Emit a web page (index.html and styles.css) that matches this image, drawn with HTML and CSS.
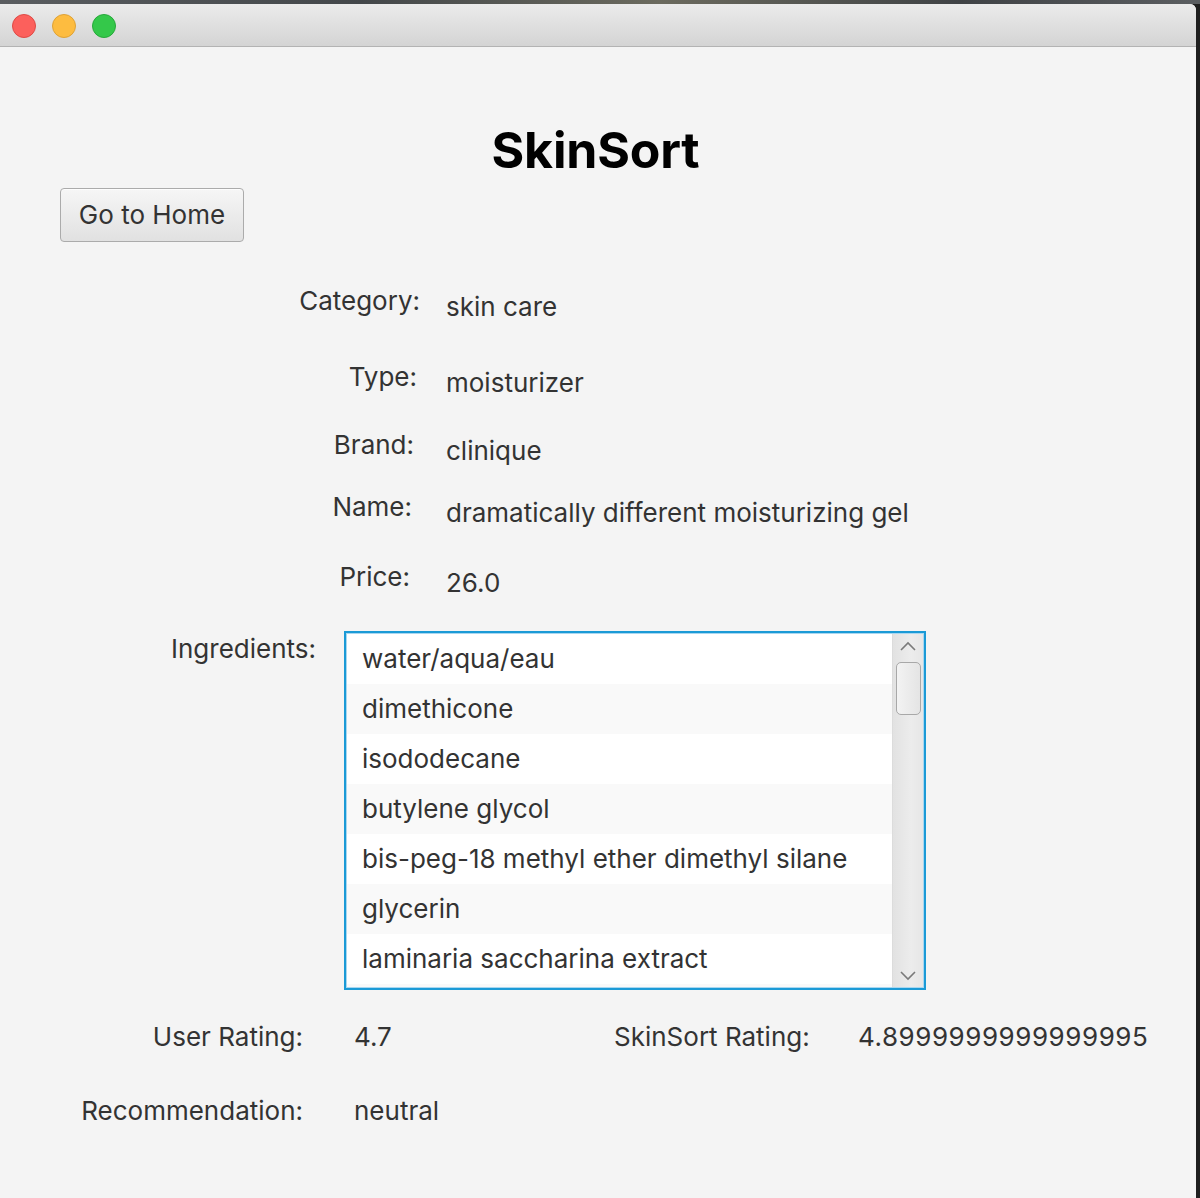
FILE: index.html
```html
<!DOCTYPE html>
<html lang="en">
<head>
<meta charset="utf-8">
<title>SkinSort</title>
<link rel="stylesheet" href="styles.css">
</head>
<body>
<div class="desktop-strip"></div>
<div class="window">
  <div class="titlebar">
    <span class="light light-close"></span>
    <span class="light light-min"></span>
    <span class="light light-max"></span>
  </div>
  <div class="content">
    <h1 class="app-title">SkinSort</h1>
    <button class="home-btn">Go to Home</button>

    <div class="field field-category">
      <div class="field-label">Category:</div>
      <div class="field-value">skin care</div>
    </div>
    <div class="field field-type">
      <div class="field-label">Type:</div>
      <div class="field-value">moisturizer</div>
    </div>
    <div class="field field-brand">
      <div class="field-label">Brand:</div>
      <div class="field-value">clinique</div>
    </div>
    <div class="field field-name">
      <div class="field-label">Name:</div>
      <div class="field-value">dramatically different moisturizing gel</div>
    </div>
    <div class="field field-price">
      <div class="field-label">Price:</div>
      <div class="field-value">26.0</div>
    </div>

    <div class="ingredients">
      <div class="ingredients-label">Ingredients:</div>
      <div class="listbox">
        <div class="list-items">
          <div class="list-row">water/aqua/eau</div>
          <div class="list-row">dimethicone</div>
          <div class="list-row">isododecane</div>
          <div class="list-row">butylene glycol</div>
          <div class="list-row">bis-peg-18 methyl ether dimethyl silane</div>
          <div class="list-row">glycerin</div>
          <div class="list-row">laminaria saccharina extract</div>
          <div class="list-row list-row-empty"></div>
        </div>
        <div class="scrollbar">
          <svg class="arrow arrow-up" width="20" height="12" viewBox="0 0 20 12"><path d="M3 10 L10 3 L17 10" fill="none" stroke="#7a7a7a" stroke-width="1.6"/></svg>
          <div class="thumb"></div>
          <div class="track-fill"></div>
          <svg class="arrow arrow-down" width="20" height="12" viewBox="0 0 20 12"><path d="M3 2 L10 9 L17 2" fill="none" stroke="#7a7a7a" stroke-width="1.6"/></svg>
        </div>
      </div>
    </div>

    <div class="rating-row">
      <div class="r-label">User Rating:</div>
      <div class="r-value r-value-user">4.7</div>
      <div class="r-label-2">SkinSort Rating:</div>
      <div class="r-value-2">4.8999999999999995</div>
    </div>
    <div class="rating-row rating-row-rec">
      <div class="r-label">Recommendation:</div>
      <div class="r-value">neutral</div>
    </div>
  </div>
</div>
</body>
</html>
```
FILE: styles.css
```css
* { box-sizing: border-box; }
html, body {
  margin: 0;
  padding: 0;
  width: 1200px;
  height: 1198px;
  overflow: hidden;
}
body {
  background: #1f1f1f;
  font-family: Inter, "Noto Sans", sans-serif;
  color: #333333;
}
.desktop-strip {
  height: 4px;
  background: linear-gradient(90deg, #5a5d60 0%, #43474a 30%, #6b6a5e 55%, #3f4245 80%, #5b5e61 100%);
}
.window {
  width: 1196px;
  height: 1194px;
  background: #f4f4f4;
  border-top-right-radius: 6px;
  overflow: hidden;
}
.titlebar {
  height: 43px;
  background: linear-gradient(#ebebeb, #d4d4d4);
  border-bottom: 1px solid #b3b3b3;
  display: flex;
  align-items: center;
  gap: 16px;
  padding-left: 12px;
  padding-top: 1px;
}
.light {
  width: 24px;
  height: 24px;
  border-radius: 50%;
  display: block;
}
.light-close { background: #fc605c; border: 1px solid #de4a45; }
.light-min { background: #fdbc40; border: 1px solid #dea236; }
.light-max { background: #34c84a; border: 1px solid #27a83a; }

.content {
  display: flex;
  flex-direction: column;
}
.app-title {
  margin: 74px 0 0 0;
  padding-right: 5px;
  font-size: 50px;
  line-height: 58px;
  font-weight: 700;
  color: #000;
  text-align: center;
  letter-spacing: -0.2px;
}
.home-btn {
  align-self: flex-start;
  margin: 9px 0 0 60px;
  width: 184px;
  height: 54px;
  font-family: inherit;
  font-size: 26px;
  color: #333;
  background: linear-gradient(#f6f6f6, #e1e1e1);
  border: 1px solid #ababab;
  border-radius: 4px;
  padding: 0 0 2px 0;
  box-shadow: inset 0 1px 0 #fdfdfd;
}

.field {
  display: flex;
  height: 36px;
  font-size: 26px;
}
.field-label {
  width: 420px;
  text-align: right;
  line-height: 30px;
}
.field-value {
  margin-left: 26px;
  padding-top: 6px;
  line-height: 30px;
  white-space: nowrap;
}
.field-category { margin-top: 44px; }
.field-type { margin-top: 40px; }
.field-type .field-label { width: 417px; }
.field-type .field-value { margin-left: 29px; }
.field-brand { margin-top: 32px; }
.field-brand .field-label { width: 414px; }
.field-brand .field-value { margin-left: 32px; }
.field-name { margin-top: 26px; }
.field-name .field-label { width: 412px; }
.field-name .field-value { margin-left: 34px; }
.field-price { margin-top: 34px; }
.field-price .field-label { width: 410px; }
.field-price .field-value { margin-left: 36px; }

.ingredients {
  display: flex;
  margin-top: 33px;
  font-size: 26px;
}
.ingredients-label {
  width: 316px;
  text-align: right;
  line-height: 30px;
  padding-top: 3px;
}
.listbox {
  margin-left: 28px;
  width: 582px;
  height: 359px;
  border: 2px solid #1b9ad6;
  box-shadow: 0 0 0 1px #a9d7f0 inset;
  padding: 1px;
  display: flex;
  background: #fff;
}
.list-items {
  flex: 1;
  overflow: hidden;
}
.list-row {
  height: 50px;
  line-height: 50px;
  padding-left: 15px;
  background: #ffffff;
  color: #333;
  white-space: nowrap;
}
.list-row:nth-child(even) { background: #f9f9f9; }
.scrollbar {
  width: 31px;
  background: linear-gradient(90deg, #e2e2e2, #ececec 60%, #e6e6e6);
  border-left: 1px solid #dcdcdc;
  display: flex;
  flex-direction: column;
  align-items: center;
}
.arrow {
  flex: none;
}
.arrow-up { margin: 6px 0 10px; }
.arrow-down { margin: 0 0 5px; }
.thumb {
  width: 25px;
  height: 53px;
  border: 1px solid #a8a8a8;
  border-radius: 5px;
  background: linear-gradient(90deg, #f3f3f3, #e4e4e4);
}
.track-fill { flex: 1; }

.rating-row {
  display: flex;
  margin-top: 32px;
  font-size: 26px;
  line-height: 30px;
  white-space: nowrap;
}
.rating-row-rec { margin-top: 44px; }
.r-label {
  width: 303px;
  text-align: right;
}
.r-value {
  margin-left: 51px;
  width: 260px;
}
.r-label-2 {
  width: 244px;
}
.r-value-2 {
  letter-spacing: 0.55px;
}
```
